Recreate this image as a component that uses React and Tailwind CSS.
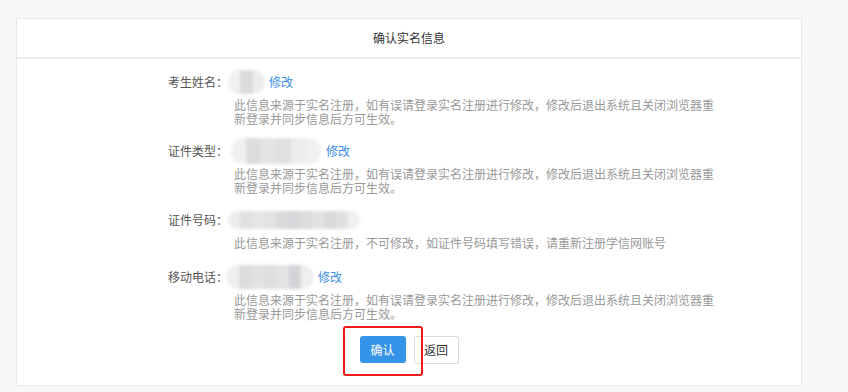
import React from "react";

const font = { fontFamily: '"Noto Sans CJK SC", "Noto Sans", sans-serif' };

function Blur({ w, h = 24, cells }) {
    return (
        <div
            className="flex overflow-hidden rounded-full blur-[1.5px]"
            style={{ width: w, height: h }}
        >
            {cells.map((c, i) => (
                <div key={i} className="flex-1" style={{ background: c }} />
            ))}
        </div>
    );
}

function Row({ label, value, edit, desc, className = "" }) {
    return (
        <div className={`flex ${className}`}>
            <div className="w-[211px] shrink-0 h-[26px] flex items-center justify-end text-[#555]">
                {label}
            </div>
            <div className="flex-1">
                <div className="h-[26px] flex items-center">
                    {value}
                    {edit && (
                        <a className="ml-[4px] text-[#3a8ee6] cursor-pointer">修改</a>
                    )}
                </div>
                <p className="ml-[6px] mt-[3px] w-[486px] text-[#999] leading-[14px]">
                    {desc}
                </p>
            </div>
        </div>
    );
}

const longDesc =
    "此信息来源于实名注册，如有误请登录实名注册进行修改，修改后退出系统且关闭浏览器重新登录并同步信息后方可生效。";

export default function App() {
    return (
        <div className="min-h-screen bg-[#f7f7f7] pt-[18px] text-[12px]" style={font}>
            <div className="ml-[16px] w-[786px] h-[368px] bg-white border border-[#e8e8e8]">
                <div className="h-[40px] flex items-center justify-center border-b-2 border-[#ececec] text-[#333]">
                    确认实名信息
                </div>
                <div className="pt-[10px]">
                    <Row
                        label="考生姓名："
                        edit
                        value={<Blur w={37} cells={["#f0f0f0", "#dcdcdc", "#ececec"]} />}
                        desc={longDesc}
                    />
                    <Row
                        className="mt-[12px]"
                        label="证件类型："
                        edit
                        value={
                            <div className="ml-[3px] mr-[1px]">
                                <Blur
                                    w={90}
                                    h={26}
                                    cells={["#f0f0f0", "#dddddd", "#e4e4e4", "#e0e0e0", "#ececec", "#f0f0f0"]}
                                />
                            </div>
                        }
                        desc={longDesc}
                    />
                    <Row
                        className="mt-[12px]"
                        label="证件号码："
                        value={
                            <Blur
                                w={132}
                                h={18}
                                cells={["#ececec", "#e0e0e0", "#e6e6e6", "#e2e2e2", "#dadada", "#d8d8dc", "#dcdcdc", "#e2e2e2", "#dadada", "#e0e0e0", "#f0f0f0"]}
                            />
                        }
                        desc="此信息来源于实名注册，不可修改，如证件号码填写错误，请重新注册学信网账号"
                    />
                    <Row
                        className="mt-[14px]"
                        label="移动电话："
                        edit
                        value={
                            <div className="-ml-[2px]">
                                <Blur
                                    w={88}
                                    cells={["#f0f0f0", "#dcdcdc", "#e2e2e2", "#dedede", "#e4e4e4", "#d4d4d8", "#eeeeee"]}
                                />
                            </div>
                        }
                        desc={longDesc}
                    />
                </div>
                <div className="mt-[15px] flex justify-center gap-[8px]">
                    <div className="relative">
                        <button className="h-[27px] w-[46px] rounded-[3px] bg-[#3593e8] text-white">
                            确认
                        </button>
                        <div className="absolute left-[-17px] top-[-10px] w-[80px] h-[50px] border-2 border-[#f01818] rounded-[3px]" />
                    </div>
                    <button className="h-[28px] w-[45px] rounded-[2px] border border-[#dcdcdc] bg-white text-[#333]">
                        返回
                    </button>
                </div>
            </div>
        </div>
    );
}
